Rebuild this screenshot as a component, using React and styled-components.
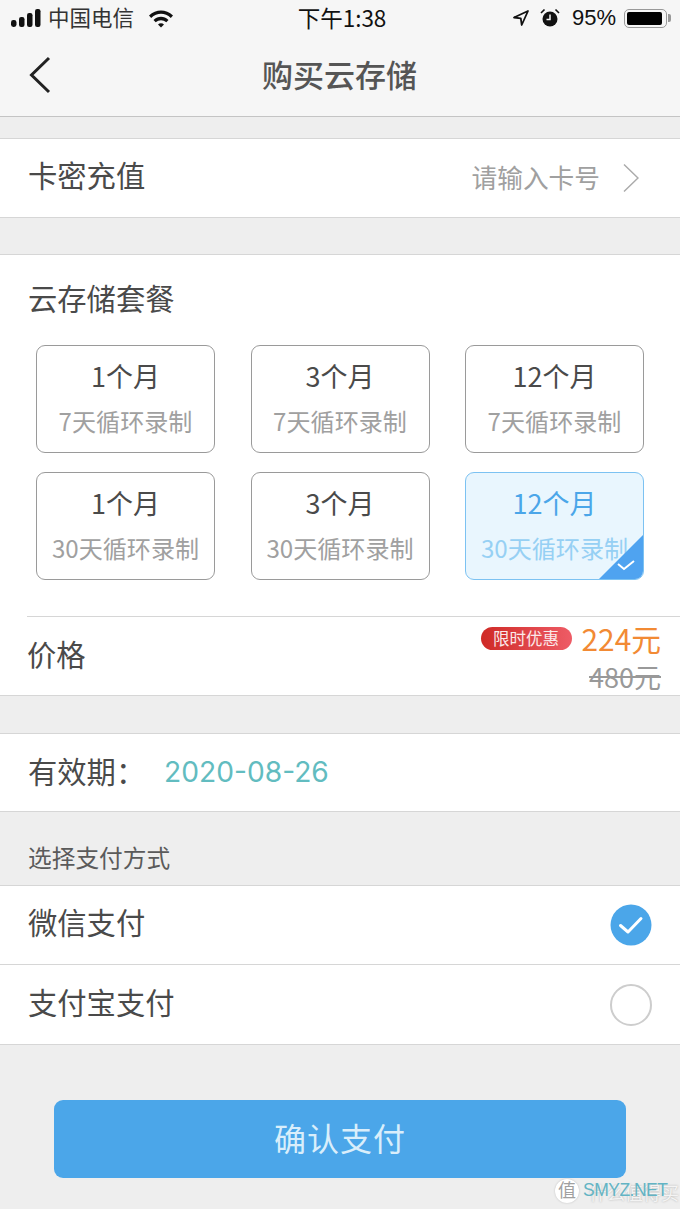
import React from "react";
import styled, { createGlobalStyle } from "styled-components";

const plans = [
  { id: 1, months: "1个月", days: "7天循环录制" },
  { id: 2, months: "3个月", days: "7天循环录制" },
  { id: 3, months: "12个月", days: "7天循环录制" },
  { id: 4, months: "1个月", days: "30天循环录制" },
  { id: 5, months: "3个月", days: "30天循环录制" },
  { id: 6, months: "12个月", days: "30天循环录制", selected: true },
];

export default function App() {
  return (
    <Page>
      <GlobalStyle />
      <Header>
        <StatusBar>
          <StatusLeft>
            <Signal viewBox="0 0 30 18" width="30" height="18">
              <rect x="0" y="11" width="5.5" height="7" rx="2.4" />
              <rect x="8" y="8" width="5.5" height="10" rx="2.2" />
              <rect x="16" y="4" width="5.5" height="14" rx="2.2" />
              <rect x="24" y="0" width="5.5" height="18" rx="2.2" />
            </Signal>
            <Carrier>中国电信</Carrier>
            <svg viewBox="0 0 26 20" width="26" height="20">
              <path d="M1 7.5C8 .8 18 .8 25 7.5l-2.2 2.4C16.8 4.5 9.2 4.5 3.2 9.900z" fill="#111" />
              <path d="M5.500 12C10 7.800 16 7.800 20.500 12l-2.200 2.300c-3.200-2.800-7.400-2.800-10.600 0z" fill="#111" />
              <path d="M10 16.400c1.800-1.500 4.200-1.500 6 0L13 19.500z" fill="#111" />
            </svg>
          </StatusLeft>
          <Clock>下午1:38</Clock>
          <StatusRight>
            <svg viewBox="0 0 18 18" width="18" height="18">
              <path d="M16 2 2 8.500l6.800.8.900 6.700z" fill="none" stroke="#111" strokeWidth="1.800" strokeLinejoin="round" />
            </svg>
            <AlarmIcon viewBox="0 0 20 20" width="20" height="20">
              <circle cx="10" cy="11" r="7.500" fill="#111" />
              <path d="M10 6.500V11.500H6.500" fill="none" stroke="#f6f6f6" strokeWidth="1.500" />
              <path d="M1 5 4.500 1.500M19 5 15.500 1.500" stroke="#111" strokeWidth="1.600" />
            </AlarmIcon>
            <Percent>95%</Percent>
            <Battery>
              <BatteryFill />
            </Battery>
          </StatusRight>
        </StatusBar>
        <NavBar>
          <svg viewBox="0 0 24 38" width="24" height="38">
            <path d="M21 2 3.500 19 21 36" fill="none" stroke="#222" strokeWidth="3" />
          </svg>
          <Title>购买云存储</Title>
        </NavBar>
      </Header>

      <CardRow $top={21} $height={80}>
        <PayLabel>卡密充值</PayLabel>
        <CardInput>
          <CardHint>请输入卡号</CardHint>
          <svg viewBox="0 0 16 30" width="16" height="30">
            <path d="M1 1.500 15 15 1 28.500" fill="none" stroke="#ababab" strokeWidth="1.500" />
          </svg>
        </CardInput>
      </CardRow>

      <PlanSection>
        <SectionTitle>云存储套餐</SectionTitle>
        <PlanGrid>
          {plans.map((plan) => (
            <PlanCard key={plan.id} $selected={plan.selected}>
              <PlanMonths $selected={plan.selected}>{plan.months}</PlanMonths>
              <PlanDays $selected={plan.selected}>{plan.days}</PlanDays>
              {plan.selected && (
                <Corner viewBox="0 0 44 44" width="44" height="44">
                  <path d="M44 0V38a6 6 0 0 1-6 6H0z" fill="#4fa3f0" />
                  <path d="M19 29l6 5 10-8" fill="none" stroke="#fff" strokeWidth="2" />
                </Corner>
              )}
            </PlanCard>
          ))}
        </PlanGrid>
        <PriceRow>
          <PriceLabel>价格</PriceLabel>
          <PriceBox>
            <PriceLine>
              <PromoBadge>限时优惠</PromoBadge>
              <Price>224元</Price>
            </PriceLine>
            <OldPrice>480元</OldPrice>
          </PriceBox>
        </PriceRow>
      </PlanSection>

      <CardRow $top={37} $height={79}>
        <ExpiryLabel>有效期：</ExpiryLabel>
        <ExpiryDate>2020-08-26</ExpiryDate>
      </CardRow>

      <PayTitle>选择支付方式</PayTitle>
      <PayList>
        <PayRow>
          <PayLabel>微信支付</PayLabel>
          <svg viewBox="0 0 42 42" width="42" height="42">
            <circle cx="21" cy="21" r="20.500" fill="#4ba6e9" />
            <path d="M10.500 21.500 18 28 31 14.500" fill="none" stroke="#fff" strokeWidth="3" strokeLinecap="round" strokeLinejoin="round" />
          </svg>
        </PayRow>
        <PayRow>
          <PayLabel>支付宝支付</PayLabel>
          <RadioOff />
        </PayRow>
      </PayList>

      <ConfirmButton>确认支付</ConfirmButton>

      <Watermark>
        <WatermarkSeal>值</WatermarkSeal>
        <WatermarkGhost>什么值得买</WatermarkGhost>
        <WatermarkText>SMYZ.NET</WatermarkText>
      </Watermark>
    </Page>
  );
}

const GlobalStyle = createGlobalStyle`
  html, body {
    margin: 0;
    padding: 0;
    background: #eeeeee;
  }
  * {
    box-sizing: border-box;
  }
`;

const Page = styled.div`
  position: relative;
  width: 680px;
  height: 1209px;
  overflow: hidden;
  background: #eeeeee;
  font-family: "Noto Sans CJK SC", "Noto Sans", sans-serif;
  color: #4a4a4a;
`;

const Header = styled.header`
  height: 117px;
  background: #f6f6f6;
  border-bottom: 1px solid #c4c4c4;
`;

const StatusBar = styled.div`
  height: 38px;
  padding: 0 10px 2px 11px;
  display: flex;
  align-items: center;
  justify-content: space-between;
  color: #111;
`;

const StatusLeft = styled.div`
  width: 220px;
  display: flex;
  align-items: center;
  gap: 8px;
`;

const StatusRight = styled(StatusLeft)`
  justify-content: flex-end;
`;

const Signal = styled.svg`
  fill: #111;
`;

const AlarmIcon = styled.svg`
  margin-left: 2px;
`;

const Carrier = styled.span`
  font-size: 21.5px;
  line-height: 36px;
  padding-bottom: 3px;
  margin-left: -1px;
  margin-right: 6px;
  color: #333;
`;

const Clock = styled.span`
  font-size: 22.5px;
  line-height: 36px;
  padding-bottom: 3px;
  margin-left: 3px;
`;

const Percent = styled.span`
  font-family: "Liberation Sans", sans-serif;
  font-size: 22px;
  margin-left: 4px;
`;

const Battery = styled.div`
  position: relative;
  width: 43px;
  height: 19px;
  margin-right: 3px;
  padding: 2px;
  border: 1.500px solid #999;
  border-radius: 5px;
  &::after {
    content: "";
    position: absolute;
    right: -5px;
    top: 4px;
    width: 3px;
    height: 8px;
    border-radius: 0 2px 2px 0;
    background: #999;
  }
`;

const BatteryFill = styled.div`
  height: 100%;
  width: 95%;
  background: #000;
  border-radius: 2px;
`;

const NavBar = styled.div`
  position: relative;
  height: 78px;
  padding: 0 0 5px 28px;
  display: flex;
  align-items: center;
`;

const Title = styled.h1`
  position: absolute;
  left: -1px;
  right: 0;
  top: 14px;
  margin: 0;
  text-align: center;
  font-size: 31px;
  line-height: 44px;
  font-weight: 500;
  color: #555;
`;

const CardRow = styled.section`
  height: ${(p) => p.$height}px;
  margin-top: ${(p) => p.$top}px;
  padding: 0 28px;
  display: flex;
  align-items: center;
  background: #fff;
  border-top: 1px solid #d6d6d6;
  border-bottom: 1px solid #d6d6d6;
`;

const RowLabel = styled.span`
  font-size: 29.3px;
  line-height: 40px;
  padding-bottom: 5px;
  color: #4a4a4a;
`;

const PayLabel = styled(RowLabel)`
  padding-bottom: 8px;
`;

const PriceLabel = styled(RowLabel)`
  padding-bottom: 7px;
`;

const CardInput = styled.div`
  margin-left: auto;
  padding-right: 13px;
  display: flex;
  align-items: center;
  gap: 23px;
`;

const CardHint = styled.span`
  font-size: 25.700px;
  line-height: 36px;
  padding-bottom: 3px;
  color: #a0a0a0;
`;

const PlanSection = styled.section`
  margin-top: 36px;
  height: 442px;
  padding: 21px 0 0 0;
  display: flex;
  flex-direction: column;
  background: #fff;
  border-top: 1px solid #d6d6d6;
  border-bottom: 1px solid #d6d6d6;
`;

const SectionTitle = styled.h2`
  margin: 0 0 27px 28px;
  font-size: 29.300px;
  line-height: 42px;
  font-weight: 400;
  color: #4a4a4a;
`;

const PlanGrid = styled.div`
  padding: 0 36px;
  display: grid;
  grid-template-columns: repeat(3, 179px);
  grid-auto-rows: 108px;
  justify-content: space-between;
  row-gap: 19px;
`;

const PlanCard = styled.div`
  position: relative;
  overflow: hidden;
  padding-top: 10px;
  display: flex;
  flex-direction: column;
  align-items: center;
  gap: 6px;
  border: 1px solid ${(p) => (p.$selected ? "#7cc2f2" : "#9a9a9a")};
  border-radius: 9px;
  background: ${(p) => (p.$selected ? "#e9f6fe" : "#fff")};
`;

const PlanMonths = styled.div`
  font-size: 27px;
  line-height: 40px;
  color: ${(p) => (p.$selected ? "#4ba6e9" : "#4a4a4a")};
`;

const PlanDays = styled.div`
  font-size: 24.100px;
  line-height: 38px;
  white-space: nowrap;
  color: ${(p) => (p.$selected ? "#96d0f4" : "#a0a0a0")};
`;

const Corner = styled.svg`
  position: absolute;
  right: 0;
  bottom: 0;
`;

const PriceRow = styled.div`
  margin: 36px 0 0 27px;
  flex: 1;
  padding-right: 19px;
  display: flex;
  align-items: center;
  justify-content: space-between;
  border-top: 1px solid #d6d6d6;
`;

const PriceBox = styled.div`
  display: flex;
  flex-direction: column;
  align-items: flex-end;
  padding-top: 1px;
`;

const PriceLine = styled.div`
  display: flex;
  align-items: center;
  gap: 10px;
`;

const PromoBadge = styled.span`
  width: 91px;
  height: 23px;
  border-radius: 12px;
  background: linear-gradient(90deg, #cf2a26, #ee5c66);
  color: #fbe9e9;
  font-size: 16.500px;
  line-height: 22px;
  text-align: center;
`;

const Price = styled.span`
  font-size: 29.800px;
  line-height: 40px;
  color: #f28a34;
`;

const OldPrice = styled.span`
  font-size: 27px;
  line-height: 38px;
  color: #999;
  text-decoration: line-through;
`;

const ExpiryLabel = styled(RowLabel)`
  width: 136px;
`;

const ExpiryDate = styled.span`
  font-family: "Inter", sans-serif;
  font-size: 28.200px;
  line-height: 40px;
  padding-bottom: 2px;
  color: #62bcc0;
`;

const PayTitle = styled.div`
  height: 73px;
  padding: 28px 0 0 28px;
  font-size: 23.700px;
  line-height: 34px;
  color: #5a5a5a;
`;

const PayList = styled.div`
  background: #fff;
  border-top: 1px solid #d6d6d6;
  border-bottom: 1px solid #d6d6d6;
`;

const PayRow = styled.div`
  height: 78px;
  padding: 0 28px;
  display: flex;
  align-items: center;
  justify-content: space-between;
  & + & {
    height: 80px;
    border-top: 1px solid #d6d6d6;
  }
`;

const RadioOff = styled.span`
  width: 42px;
  height: 42px;
  border-radius: 50%;
  border: 2px solid #cdcdcd;
`;

const ConfirmButton = styled.button`
  display: block;
  width: 572px;
  height: 78px;
  margin: 55px 0 0 54px;
  padding: 0 0 5px;
  border: 0;
  border-radius: 9px;
  background: #4ba6e9;
  color: #d9eefb;
  font-family: inherit;
  font-size: 32px;
  letter-spacing: 1px;
`;

const Watermark = styled.div`
  position: absolute;
  left: 555px;
  top: 1179px;
  width: 125px;
  height: 24px;
  display: flex;
  align-items: center;
`;

const WatermarkSeal = styled.span`
  width: 24px;
  height: 24px;
  border-radius: 50%;
  background: #fff;
  box-shadow: 0 0 2px #bbb;
  color: #a0a0a0;
  font-size: 18px;
  line-height: 21px;
  text-align: center;
`;

const WatermarkGhost = styled.span`
  position: absolute;
  left: 34px;
  top: 1px;
  font-size: 18px;
  line-height: 24px;
  color: #f4f4f4;
  text-shadow: 0 0 2px #aaa;
  white-space: nowrap;
`;

const WatermarkText = styled.span`
  position: absolute;
  left: 28px;
  top: 0;
  font-family: "Liberation Sans", sans-serif;
  font-size: 17.500px;
  line-height: 22px;
  letter-spacing: -0.500px;
  color: #63b4c4;
  white-space: nowrap;
`;
